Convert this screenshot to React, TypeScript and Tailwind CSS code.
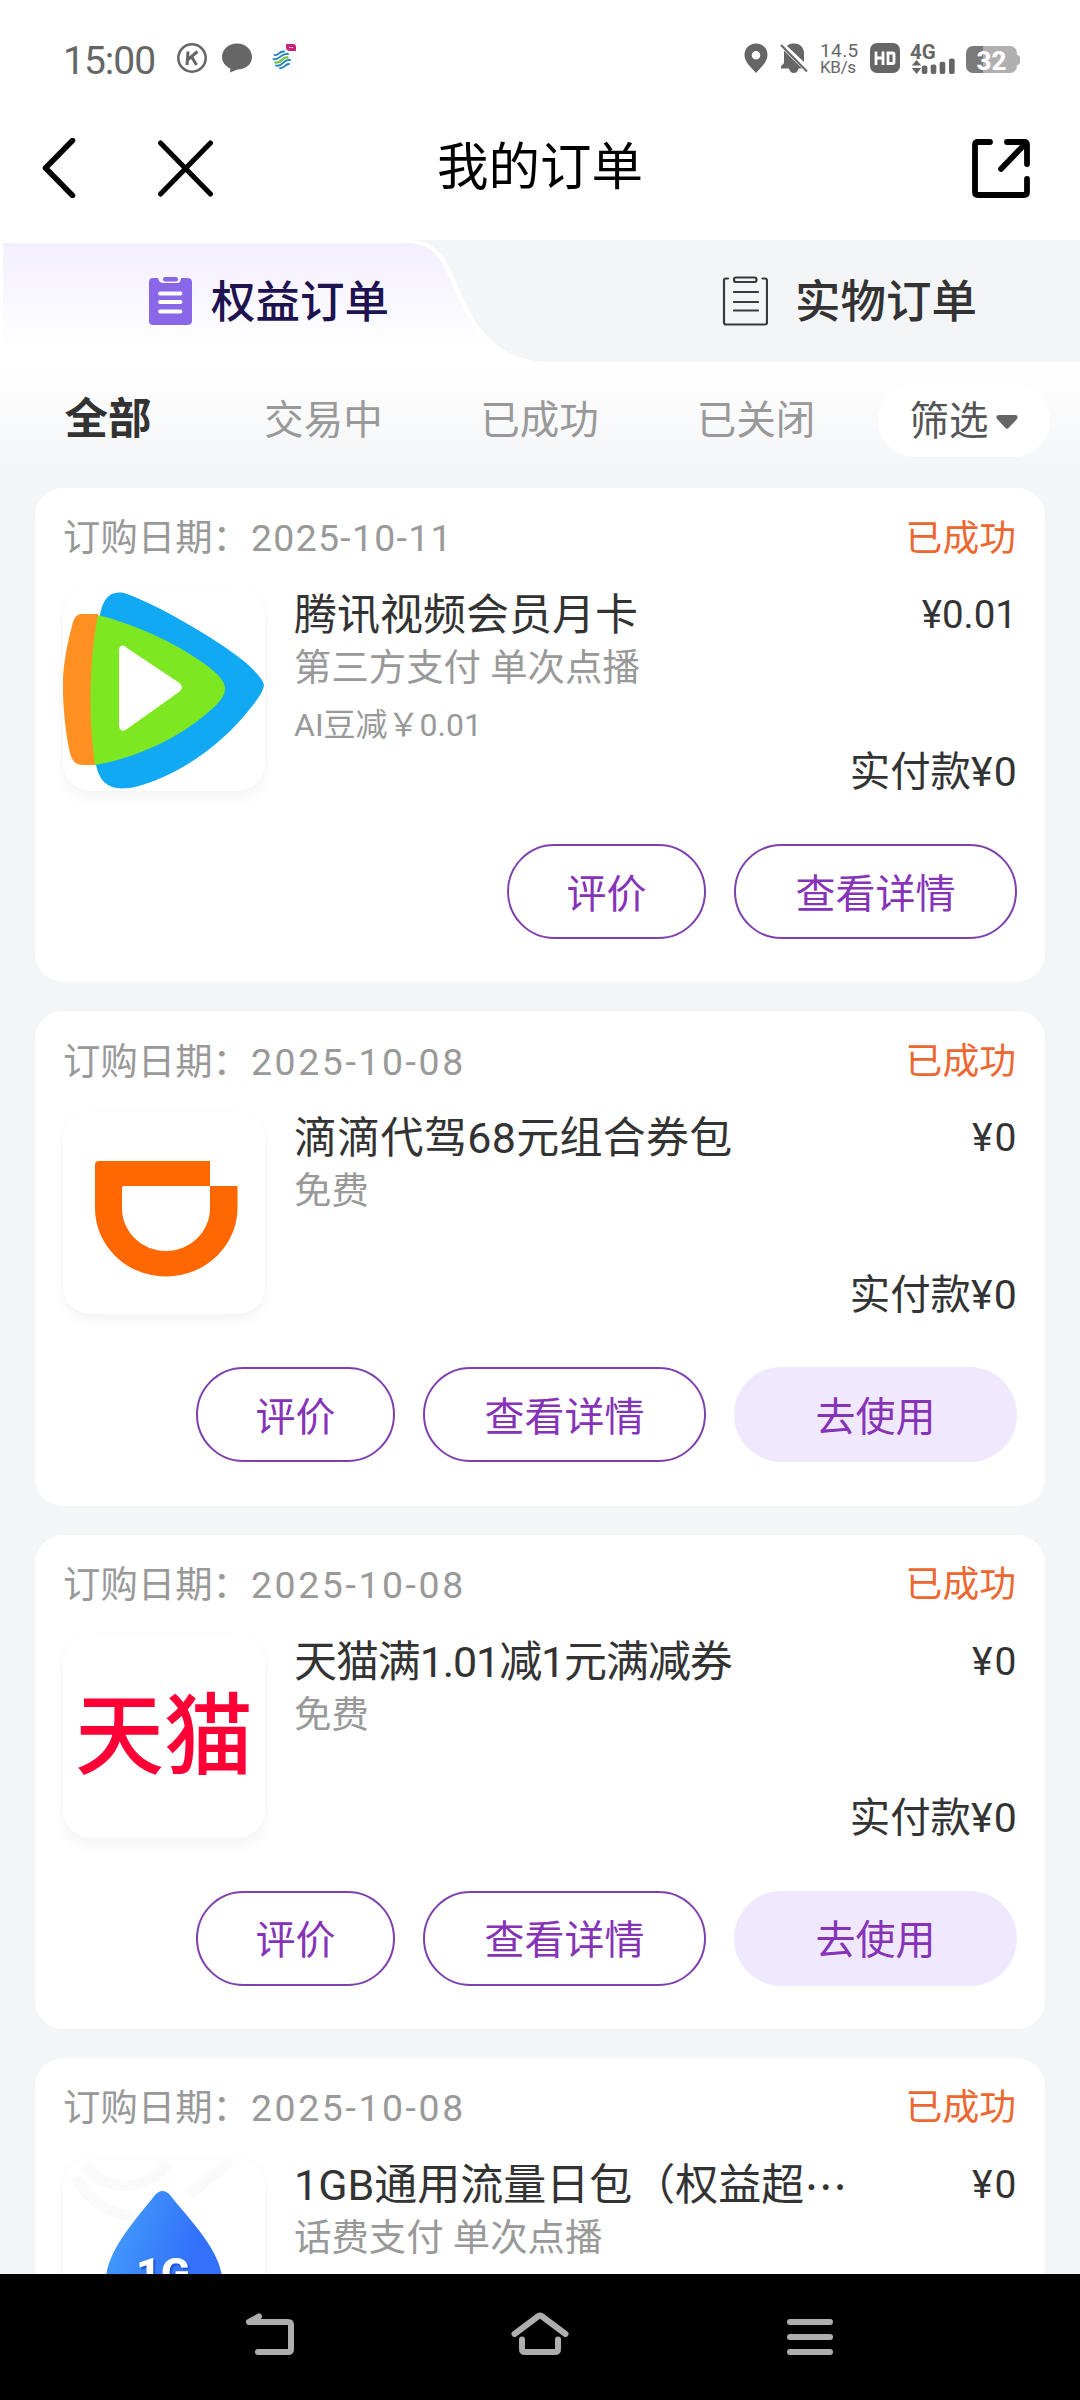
import type { ReactNode } from "react";
import clsx from "clsx";

interface Order {
  id: number;
  date: string;
  dateClass: string;
  status: string;
  title: string;
  titleClass?: string;
  truncated?: boolean;
  payType: string;
  discount?: string;
  price: string;
  priceClass: string;
  paid: string;
  canUse: boolean;
  logo: ReactNode;
}

function TencentVideoLogo() {
  return (
    <svg viewBox="0 0 202 202" className="size-full">
      <path d="M37 26C40 9 48 0 64 5C90 14 150 47 182 73Q200 89 201 96Q201 102 190 116C155 162 108 189 72 198C48 203 37 195 33 176Z" fill="#12a9f4" />
      <path d="M35 25H19C13 25 11 29 9 37C2 63 -1 85 0 106C1 130 4 152 7 164C9 172 13 176 20 176H32Z" fill="#ff9021" />
      <path d="M35 26C78 37 120 58 147 79C167 95 166 104 150 119C121 146 78 168 32 176C26 135 25 76 35 26Z" fill="#7de722" />
      <path d="M56 62C56 56 60 55 64 59L115 93C120 96 120 100 116 103L64 140C60 143 56 142 56 136Z" fill="#fff" />
    </svg>
  );
}

function DidiLogo() {
  return (
    <svg viewBox="0 0 202 202" className="size-full">
      <path
        d="M36 49H147V74H174.500V96C174.500 134 142 164.500 103 164.500C64 164.500 32 134 32 96V53Q32 49 36 49ZM61 74Q59 74 59 76V96C59 120 79 139 103 139C127 139 147 120 147 96V74Z"
        fill="#ff6700"
        fillRule="evenodd"
      />
    </svg>
  );
}

function TmallLogo() {
  return (
    <div className="flex size-full items-center justify-center text-[89px] leading-none font-medium text-[#ff0036]">
      天猫
    </div>
  );
}

function DataPackLogo() {
  return (
    <svg viewBox="0 0 202 202" className="size-full">
      <defs>
        <linearGradient id="drop" x1="0" y1="0" x2="1" y2="0.4">
          <stop offset="0.2" stopColor="#4096fb" />
          <stop offset="0.8" stopColor="#3371fb" />
        </linearGradient>
      </defs>
      <path d="M12 18C26 42 44 54 70 58M22 6C44 32 78 36 106 4M126 36L168 2" fill="none" stroke="#fafafa" strokeWidth="11" />
      <path d="M92 36Q99.500 28 107 36C124 58 159 92 159 121C159 150 132 170 101 170C70 170 43 150 43 121C43 92 75 58 92 36Z" fill="url(#drop)" />
      <text
        x="100"
        y="129"
        textAnchor="middle"
        fontSize="43"
        fontWeight="800"
        fill="#fff"
        className="drop-shadow-[2px_2px_0_#2257d8]"
      >
        1G
      </text>
    </svg>
  );
}

const orders: Order[] = [
  {
    id: 1,
    date: "2025-10-11",
    dateClass: "tracking-[1.3px]",
    status: "已成功",
    title: "腾讯视频会员月卡",
    payType: "第三方支付 单次点播",
    discount: "AI豆减￥0.01",
    price: "¥0.01",
    priceClass: "text-[38.5px]",
    paid: "¥0",
    canUse: false,
    logo: <TencentVideoLogo />,
  },
  {
    id: 2,
    date: "2025-10-08",
    dateClass: "tracking-[2.6px]",
    status: "已成功",
    title: "滴滴代驾68元组合券包",
    titleClass: "tracking-[0.3px]",
    payType: "免费",
    price: "¥0",
    priceClass: "text-[39px] tracking-[2px] -mr-[1.5px]",
    paid: "¥0",
    canUse: true,
    logo: <DidiLogo />,
  },
  {
    id: 3,
    date: "2025-10-08",
    dateClass: "tracking-[2.6px]",
    status: "已成功",
    title: "天猫满1.01减1元满减券",
    titleClass: "tracking-[-1.1px]",
    payType: "免费",
    price: "¥0",
    priceClass: "text-[39px] tracking-[2px] -mr-[1.5px]",
    paid: "¥0",
    canUse: true,
    logo: <TmallLogo />,
  },
  {
    id: 4,
    date: "2025-10-08",
    dateClass: "tracking-[2.6px]",
    status: "已成功",
    title: "1GB通用流量日包（权益超",
    truncated: true,
    payType: "话费支付 单次点播",
    price: "¥0",
    priceClass: "text-[39px] tracking-[2px] -mr-[1.5px]",
    paid: "¥0",
    canUse: true,
    logo: <DataPackLogo />,
  },
];

function StatusBar() {
  return (
    <div className="flex h-[96px] shrink-0 items-start justify-between pt-[42px] pr-[60px] pl-[63px] text-[#666]">
      <div className="flex h-8 items-center">
        <span className="mt-[7px] w-[114px] text-[39px] leading-none tracking-[-1px]">15:00</span>
        <svg viewBox="0 0 30 30" className="size-[30px]" fill="none" stroke="currentColor">
          <circle cx="15" cy="15" r="13.700" strokeWidth="2.600" />
          <path d="M11 8.500L10 22M20.500 8.500L11 16.500M14.500 13.500L19.500 22" strokeWidth="3" />
        </svg>
        <svg viewBox="0 0 30 30" className="ml-[15px] size-[30px]" fill="currentColor">
          <path d="M15 0.500C23.500 0.500 30 6.500 30 14S23.500 26.500 15.500 26.500L8 29.500L8.500 25.500C3.500 23.500 0 19 0 14C0 6.500 6.500 0.500 15 0.500Z" />
        </svg>
        <svg viewBox="0 0 26 28" className="-mt-[3px] ml-[20px] h-[28px] w-[26px]">
          <g fill="none" strokeWidth="1.800" strokeLinecap="round">
            <path d="M2.500 12C6 13.500 7 8 12 8.500" stroke="#1b7fc4" />
            <path d="M1.500 16C7 18 9 9.500 16 11" stroke="#1b7fc4" />
            <path d="M3.500 19.500C10 21 10 13 15.500 14.500" stroke="#7cc242" strokeWidth="2.400" />
            <path d="M4 22.500C11 24.500 11 15.500 18 17" stroke="#1b7fc4" />
            <path d="M8 25C13 25.500 13 20.500 17 21" stroke="#1b7fc4" />
          </g>
          <path d="M14 1H21Q24 1 24 4V8H18Q14 8 14 4Z" fill="#cc1f78" />
          <path d="M17 4.500H21" stroke="#fff" strokeDasharray="1.500 1" />
        </svg>
      </div>

      <div className="flex h-8 items-center">
        <svg viewBox="0 0 24 30" className="h-[30px] w-[24px]" fill="currentColor">
          <path fillRule="evenodd" d="M12 0.500C18.500 0.500 23.500 5.500 23.500 12C23.500 19 17 24 12 30C7 24 0.500 19 0.500 12C0.500 5.500 5.500 0.500 12 0.500ZM12 8A4.300 4.300 0 1 0 12 16.600A4.300 4.300 0 1 0 12 8Z" />
        </svg>
        <svg viewBox="0 0 28 30" className="ml-[12px] h-[30px] w-[28px]" fill="currentColor">
          <path d="M7 3C9 1 11 0.500 14 0.500C20 0.500 24 4.500 24 10.500V19Z" />
          <path d="M4 7.500L22 25.500H18.500C18 28 16.500 30 13.800 30C11 30 9.500 28 9 25.500H1V23L4 20Z" />
          <path d="M1 2L27 28.500" stroke="currentColor" strokeWidth="2" />
        </svg>
        <div className="mt-[2px] ml-[12px] flex w-[39px] flex-col text-[19px] leading-[17px]">
          <span className="tracking-[0.4px]">14.5</span>
          <span className="text-[17px] tracking-[-0.3px]">KB/s</span>
        </div>
        <svg viewBox="0 0 30 30" className="ml-[11px] size-[30px]">
          <rect width="30" height="30" rx="7" fill="currentColor" />
          <path d="M6 8.500V22M13 8.500V22M6 15H13M18 10H22.500Q24 10 24 11.500V19Q24 20.500 22.500 20.500H18Z" fill="none" stroke="#fff" strokeWidth="2.800" />
        </svg>
        <div className="ml-[10px] flex h-[31px] w-[47px] flex-col">
          <span className="h-[16px] pt-[1px] text-[20.5px] leading-[16px] font-bold">4G</span>
          <svg viewBox="0 0 47 17" className="-mt-px h-[17px] w-[47px]" fill="currentColor">
            <path d="M5.500 2L10.500 8H0.500ZM5.500 17L0.500 10.500H10.500Z" />
            <rect x="11" y="8" width="6" height="9" rx="2" />
            <rect x="20.500" y="7" width="6" height="10" rx="2" />
            <rect x="30" y="4" width="6" height="13" rx="2" />
            <rect x="40" y="0.500" width="6" height="16.500" rx="2" />
          </svg>
        </div>
        <div className="ml-[9px] flex items-center pt-[3px]">
          <div className="flex h-[27px] w-[51px] items-center justify-center rounded-[7px] bg-linear-to-r from-[#7a7a7a] from-33% to-[#b0b0b0] to-33% pt-[2px] text-[26px] leading-none font-extrabold text-white">
            32
          </div>
          <div className="h-[10px] w-[3px] rounded-r-full bg-[#b0b0b0]" />
        </div>
      </div>
    </div>
  );
}

function Header() {
  return (
    <header className="flex h-[144px] shrink-0 items-center justify-between px-[42px]">
      <div className="flex w-[240px] items-center gap-[82px]">
        <svg viewBox="0 0 34 60" className="h-[60px] w-[34px]" fill="none" stroke="#000" strokeWidth="5.500" strokeLinecap="round" strokeLinejoin="round">
          <path d="M30.500 2.500L3.500 30L30.500 57.500" />
        </svg>
        <svg viewBox="0 0 54 56" className="h-[57px] w-[55px]" fill="none" stroke="#000" strokeWidth="5" strokeLinecap="round">
          <path d="M2.500 3L51.500 53M51.500 3L2.500 53" />
        </svg>
      </div>
      <h1 className="text-[51.500px] leading-none text-black">我的订单</h1>
      <div className="flex w-[240px] justify-end pr-[7px]">
        <svg viewBox="0 0 60 60" className="size-[60px]" fill="none" stroke="#000" strokeWidth="5.800" strokeLinecap="round" strokeLinejoin="round">
          <path d="M19 4H7Q4 4 4 7V54Q4 57 7 57H53Q56 57 56 54V41" />
          <path d="M36 4H53Q56 4 56 7V26M54 6L30 31" />
        </svg>
      </div>
    </header>
  );
}

function OrderTabs() {
  return (
    <div className="relative flex h-[122px] shrink-0 bg-[#f4f5f7]">
      <svg viewBox="0 0 1080 122" className="absolute inset-0 h-[122px] w-[1080px]">
        <defs>
          <linearGradient id="tabFill" x1="0" y1="0" x2="0" y2="1">
            <stop offset="0" stopColor="#f3efff" />
            <stop offset="0.300" stopColor="#f7f4ff" />
            <stop offset="0.900" stopColor="#ffffff" />
          </linearGradient>
        </defs>
        <path d="M0 0H412C437 1 447 20 456 42C472 80 490 118 545 122H0Z" fill="#fff" />
        <path d="M3 3H410C434 4 443 22 452 44C468 80 482 114 530 122H3Z" fill="url(#tabFill)" />
      </svg>
      <button className="relative flex h-[121px] w-[540px] items-center pl-[148px]">
        <svg viewBox="0 0 44 50" className="h-[50px] w-[44px]">
          <path d="M5 2H10Q11 7 15 7H29Q33 7 33 2H39Q44 2 44 6V45Q44 49 39 49H5Q1 49 1 45V6Q1 2 5 2Z" fill="#8967e8" />
          <rect x="15" y="1" width="15" height="4.500" rx="2" fill="#8967e8" />
          <path d="M12 17.500H32.500M12 26H32.500M12 35.500H32.500" stroke="#fff" strokeWidth="3.800" strokeLinecap="round" />
        </svg>
        <span className="mt-[5px] ml-[19px] text-[44.500px] leading-none font-medium text-[#1e1250]">权益订单</span>
      </button>
      <button className="relative flex h-[121px] w-[540px] items-center pl-[182px]">
        <svg viewBox="0 0 46 50" className="h-[50px] w-[46px]" fill="none" stroke="#3a3a3c" strokeWidth="2.200" strokeLinecap="round">
          <path d="M6 2.500H4Q2 2.500 2 4.500V46.500Q2 48.500 4 48.500H43Q45 48.500 45 46.500V4.500Q45 2.500 43 2.500H40.500" />
          <rect x="12" y="1.500" width="22.500" height="4.500" rx="2" />
          <path d="M12 16H36M12 26H36M12 34.500H36" />
        </svg>
        <span className="mt-[5px] ml-[27px] text-[45.500px] leading-none font-medium text-[#333]">实物订单</span>
      </button>
    </div>
  );
}

function FilterBar() {
  return (
    <div className="flex h-[126px] shrink-0 items-start bg-linear-to-b from-white to-[#f4f5f7] to-85% text-[39.500px] leading-none text-[#999]">
      <button className="mt-[36px] w-[216px] text-center text-[43.500px] font-bold text-[#333]">全部</button>
      <button className="mt-[39px] w-[215px] text-center">交易中</button>
      <button className="mt-[39px] w-[217px] text-center">已成功</button>
      <button className="mt-[39px] w-[216px] text-center">已关闭</button>
      <button className="mt-[22px] ml-[14px] flex h-[73px] w-[172px] items-center justify-center rounded-full bg-white pt-[2px] text-[#555]">
        筛选
        <svg viewBox="0 0 24 16" className="ml-[6px] h-[16px] w-[24px]" fill="#666">
          <path d="M4 1H20Q24 1 22 5L14 13.500Q12 16 10 13.500L2 5Q0 1 4 1Z" />
        </svg>
      </button>
    </div>
  );
}

function ActionButton({ label, wide, filled }: { label: string; wide?: boolean; filled?: boolean }) {
  return (
    <button
      className={clsx(
        "flex h-[95px] items-center justify-center rounded-full pt-[6px] text-[40px] leading-none text-[#8633b8]",
        wide ? "w-[283px]" : "w-[199px]",
        filled ? "bg-[#f0e8ff]" : "border-2 border-[#7f3fae]"
      )}
    >
      {label}
    </button>
  );
}

function OrderCard({ order }: { order: Order }) {
  return (
    <article className="flex h-[494.300px] shrink-0 flex-col rounded-[28px] bg-white px-[28px]">
      <div className="flex h-[101px] items-center justify-between pt-px leading-none">
        <div className="flex items-center text-[37.400px] text-[#999]">
          <span className="w-[188px] whitespace-nowrap">订购日期：</span>
          <span className={order.dateClass}>{order.date}</span>
        </div>
        <span className="mr-px text-[36.800px] text-[#ee6730]">{order.status}</span>
      </div>

      <div className="flex h-[202px]">
        <div className="size-[202px] shrink-0 overflow-hidden rounded-[28px] bg-white shadow-[0_6px_14px_rgba(0,0,0,0.05)]">
          {order.logo}
        </div>
        <div className="ml-[29px] flex flex-1 flex-col items-start leading-none whitespace-nowrap">
          <h2 className={clsx("mt-[5px] flex h-[43px] text-[43px] text-[#333]", order.titleClass)}>
            {order.title}
            {order.truncated && <span className="font-['Noto_Sans_CJK_SC']">…</span>}
          </h2>
          <p className="mt-[13px] text-[37.400px] text-[#999]">{order.payType}</p>
          {order.discount && <p className="mt-[22px] text-[32px] text-[#999]">{order.discount}</p>}
        </div>
        <div className="flex flex-col items-end justify-between leading-none whitespace-nowrap text-[#333]">
          <span className={clsx("mt-[7px]", order.priceClass)}>{order.price}</span>
          <span className="-mr-px -mb-[2px] text-[40.400px]">
            实付款<span className="text-[41px] tracking-[1.200px]">{order.paid}</span>
          </span>
        </div>
      </div>

      <div className="mt-[53px] flex justify-end gap-[28px]">
        <ActionButton label="评价" />
        <ActionButton label="查看详情" wide />
        {order.canUse && <ActionButton label="去使用" wide filled />}
      </div>
    </article>
  );
}

function NavBar() {
  return (
    <nav className="flex h-[126px] shrink-0 items-start justify-between bg-black px-[240px] pt-[34px]">
      <svg viewBox="0 0 60 52" className="h-[52px] w-[60px]" fill="none" stroke="#aeaeae" strokeWidth="6" strokeLinecap="round" strokeLinejoin="round">
        <path d="M19 8.500L9 14H48Q51 14 51 17V41Q51 44 48 44H18" />
      </svg>
      <svg viewBox="0 0 60 52" className="h-[52px] w-[60px]" fill="none" stroke="#aeaeae" strokeWidth="6" strokeLinecap="round" strokeLinejoin="round">
        <path d="M4.500 26L28.500 8Q30 7 31.500 8L55.500 26M12 31.500V41Q12 44 15 44H45Q48 44 48 41V31.500" />
      </svg>
      <svg viewBox="0 0 60 52" className="h-[52px] w-[60px]" fill="none" stroke="#aeaeae" strokeWidth="6" strokeLinecap="round">
        <path d="M10 14H50M10 29H50M10 44H50" />
      </svg>
    </nav>
  );
}

export default function App() {
  return (
    <div className="flex h-[2400px] w-[1080px] flex-col overflow-hidden bg-white font-['Roboto','Noto_Sans_CJK_SC',sans-serif]">
      <StatusBar />
      <Header />
      <OrderTabs />
      <FilterBar />
      <main className="flex min-h-0 flex-1 flex-col gap-[29px] overflow-hidden bg-[#f4f5f7] px-[35px]">
        {orders.map((order) => (
          <OrderCard key={order.id} order={order} />
        ))}
      </main>
      <NavBar />
    </div>
  );
}
